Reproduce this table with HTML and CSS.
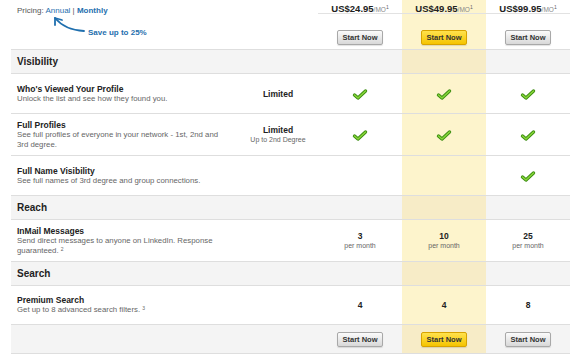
FILE: index.html
```html
<!DOCTYPE html>
<html lang="en">
<head>
    <meta charset="UTF-8">
    <meta name="viewport" content="width=device-width, initial-scale=1.0">
    <title>Premium Plans</title>
    <link rel="stylesheet" href="styles.css">
</head>
<body>
    <div class="page">
        <table class="plans">
            <colgroup>
                <col class="col-feature">
                <col class="col-basic">
                <col class="col-plan">
                <col class="col-plan">
                <col class="col-plan">
            </colgroup>
            <thead>
                <tr class="price-row">
                    <td colspan="2" rowspan="2" class="pricing-cell">
                        <div class="pricing-toggle">
                            Pricing: <a href="#" class="link">Annual</a> | <a href="#" class="link link-active">Monthly</a>
                        </div>
                        <div class="save-note">
                            <svg class="save-arrow" width="35" height="20" viewBox="0 0 35 20">
                                <path d="M32 15 Q13 14 3 2" fill="none" stroke="#1f6fae" stroke-width="1.8" stroke-linecap="round"/>
                                <path d="M10 4 L3 2 L3 9" fill="none" stroke="#1f6fae" stroke-width="1.8" stroke-linecap="round" stroke-linejoin="round"/>
                            </svg>
                            <span>Save up to 25%</span>
                        </div>
                    </td>
                    <td class="price">US$24.95<span class="per">/MO<sup>1</sup></span></td>
                    <td class="price hl">US$49.95<span class="per">/MO<sup>1</sup></span></td>
                    <td class="price">US$99.95<span class="per">/MO<sup>1</sup></span></td>
                </tr>
                <tr class="cta-row">
                    <td><button type="button" class="btn">Start Now</button></td>
                    <td class="hl"><button type="button" class="btn btn-primary">Start Now</button></td>
                    <td><button type="button" class="btn">Start Now</button></td>
                </tr>
            </thead>
            <tbody>
                <tr class="section first">
                    <td colspan="2">Visibility</td>
                    <td></td><td class="hl"></td><td></td>
                </tr>
                <tr class="feature h40">
                    <td class="feature-name">
                        <div class="title">Who's Viewed Your Profile</div>
                        <div class="desc">Unlock the list and see how they found you.</div>
                    </td>
                    <td class="value"><b>Limited</b></td>
                    <td class="value"><span class="check"></span></td>
                    <td class="value hl"><span class="check"></span></td>
                    <td class="value"><span class="check"></span></td>
                </tr>
                <tr class="feature h42">
                    <td class="feature-name">
                        <div class="title">Full Profiles</div>
                        <div class="desc">See full profiles of everyone in your network - 1st, 2nd and 3rd degree.</div>
                    </td>
                    <td class="value"><b>Limited</b><small>Up to 2nd Degree</small></td>
                    <td class="value"><span class="check"></span></td>
                    <td class="value hl"><span class="check"></span></td>
                    <td class="value"><span class="check"></span></td>
                </tr>
                <tr class="feature h40">
                    <td class="feature-name">
                        <div class="title">Full Name Visibility</div>
                        <div class="desc">See full names of 3rd degree and group connections.</div>
                    </td>
                    <td class="value"></td>
                    <td class="value"></td>
                    <td class="value hl"></td>
                    <td class="value"><span class="check"></span></td>
                </tr>
                <tr class="section">
                    <td colspan="2">Reach</td>
                    <td></td><td class="hl"></td><td></td>
                </tr>
                <tr class="feature h42">
                    <td class="feature-name">
                        <div class="title">InMail Messages</div>
                        <div class="desc">Send direct messages to anyone on LinkedIn. Response guaranteed. <sup>2</sup></div>
                    </td>
                    <td class="value"></td>
                    <td class="value"><b>3</b><small>per month</small></td>
                    <td class="value hl"><b>10</b><small>per month</small></td>
                    <td class="value"><b>25</b><small>per month</small></td>
                </tr>
                <tr class="section s24">
                    <td colspan="2">Search</td>
                    <td></td><td class="hl"></td><td></td>
                </tr>
                <tr class="feature h39">
                    <td class="feature-name">
                        <div class="title">Premium Search</div>
                        <div class="desc">Get up to 8 advanced search filters. <sup>3</sup></div>
                    </td>
                    <td class="value"></td>
                    <td class="value"><b>4</b></td>
                    <td class="value hl"><b>4</b></td>
                    <td class="value"><b>8</b></td>
                </tr>
                <tr class="footer-row">
                    <td colspan="2"></td>
                    <td><button type="button" class="btn">Start Now</button></td>
                    <td class="hl"><button type="button" class="btn btn-primary">Start Now</button></td>
                    <td><button type="button" class="btn">Start Now</button></td>
                </tr>
            </tbody>
        </table>
    </div>
</body>
</html>
```

FILE: styles.css
```css
body {
    margin: 0;
    padding: 0;
    background-color: white;
    font-family: "Liberation Sans", Arial, sans-serif;
    color: #222;
}

.page {
    padding: 0 10px 0 11px;
}

.plans {
    width: 559px;
    table-layout: fixed;
    border-collapse: separate;
    border-spacing: 0;
}

.col-feature {
    width: 227px;
}

.col-basic {
    width: 80px;
}

.col-plan {
    width: 84px;
}

td {
    padding: 0;
    box-sizing: border-box;
    vertical-align: middle;
}

.hl {
    background-color: #fdf4cc;
}

/* header */

.pricing-cell {
    vertical-align: top;
    padding: 6px 0 0 6px;
}

.pricing-toggle {
    font-size: 8px;
    line-height: 10px;
    color: #555;
}

.link {
    color: #1f6fae;
    text-decoration: none;
}

.link-active {
    font-weight: bold;
}

.save-note {
    display: flex;
    align-items: flex-end;
    gap: 1px;
    font-size: 8px;
    line-height: 10px;
    font-weight: bold;
    color: #1f6fae;
}

.save-note span {
    margin-bottom: -2px;
}

.save-arrow {
    display: block;
    margin-left: 35px;
}

.price-row td.price {
    height: 14px;
    border-bottom: 1px solid #e2e2e2;
    text-align: center;
    vertical-align: bottom;
    font-size: 9.5px;
    line-height: 7px;
    font-weight: bold;
    color: #222;
    white-space: nowrap;
}

.per {
    font-size: 6.5px;
    font-weight: normal;
    color: #888;
}

.per sup {
    font-size: 5px;
    line-height: 0;
    vertical-align: 3px;
    color: #666;
}

.cta-row td {
    height: 35px;
    padding-top: 10px;
    text-align: center;
}

.btn {
    width: 46px;
    height: 15px;
    padding: 0;
    border: 1px solid #a8a8a8;
    border-radius: 2px;
    background: linear-gradient(#fbfbfb, #d8d8d8);
    box-shadow: 0 1px 1px rgba(0, 0, 0, 0.12);
    font-family: "Liberation Sans", Arial, sans-serif;
    font-size: 7.5px;
    font-weight: bold;
    color: #333;
    cursor: pointer;
    vertical-align: middle;
}

.btn-primary {
    border-color: #d7a300;
    background: linear-gradient(#ffe24d, #f5c400);
}

/* body rows */

tbody td {
    border-bottom: 1px solid #dedede;
}

.section td {
    height: 24px;
    background-color: #f4f4f4;
    font-size: 10px;
    font-weight: bold;
    color: #222;
}

.section td:first-child {
    padding-left: 6px;
}

.section.first td {
    height: 25px;
    border-top: 1px solid #dedede;
}

.section.s24 td {
    height: 24px;
}

.section td.hl {
    background-color: #f7ecc7;
}

.h39 td { height: 39px; }
.h40 td { height: 40px; }
.h42 td { height: 42px; }

.feature-name {
    padding-left: 6px;
}

.title {
    font-size: 8.5px;
    line-height: 10px;
    font-weight: bold;
    color: #222;
}

.desc {
    font-size: 7.8px;
    line-height: 10px;
    color: #666;
    padding-right: 12px;
}

.desc sup {
    font-size: 5px;
    line-height: 0;
    vertical-align: 2px;
}

.value {
    text-align: center;
}

.value b {
    display: block;
    font-size: 8.5px;
    line-height: 10px;
    color: #222;
}

.value small {
    display: block;
    font-size: 7px;
    line-height: 9px;
    color: #666;
}

.check {
    display: inline-block;
    width: 16px;
    height: 13px;
    vertical-align: middle;
    background: url("data:image/svg+xml;utf8,<svg xmlns='http://www.w3.org/2000/svg' width='16' height='13' viewBox='0 0 16 13'><path d='M2.5 7 L6 10 L13.5 3' fill='none' stroke='%233c8c12' stroke-width='3.4' stroke-linecap='round' stroke-linejoin='round'/><path d='M2.5 7 L6 10 L13.5 3' fill='none' stroke='%2387d638' stroke-width='1.6' stroke-linecap='round' stroke-linejoin='round'/></svg>") no-repeat center;
}

.footer-row td {
    height: 29px;
    background-color: #f4f4f4;
    text-align: center;
}

.footer-row td.hl {
    background-color: #f7ecc7;
}
```
